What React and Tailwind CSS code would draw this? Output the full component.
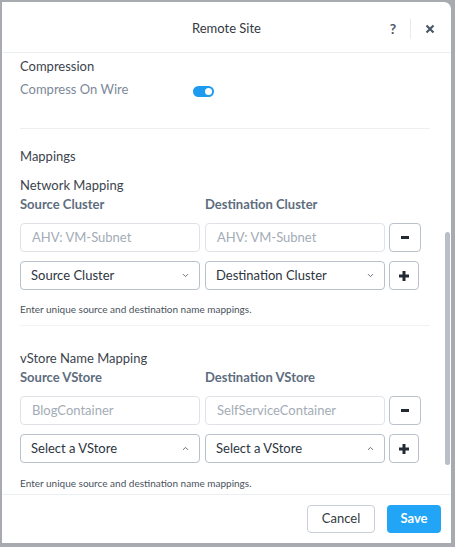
import { ChevronDown, ChevronUp } from "lucide-react";

const font = { fontFamily: "Lato, 'Open Sans', sans-serif" };

function TextBox({ value }) {
  return (
    <div className="w-[180px] h-[29px] border border-[#dfe3e8] rounded-[4px] flex items-center px-[11px] text-[13px] text-[#a3acb6] bg-white">
      {value}
    </div>
  );
}

function Select({ label, open }) {
  return (
    <div className="w-[180px] h-[29px] border border-[#b9c1cb] rounded-[4px] flex items-center justify-between pl-[10px] pr-[9px] text-[13px] text-[#2d3540] bg-white">
      <span>{label}</span>
      {open ? (
        <ChevronUp size={9} strokeWidth={2.5} className="text-[#5b6878]" />
      ) : (
        <ChevronDown size={9} strokeWidth={2.5} className="text-[#5b6878]" />
      )}
    </div>
  );
}

function SquareButton({ kind }) {
  return (
    <div
      className={`${kind === "minus" ? "w-[32px]" : "w-[30px]"} h-[29px] border border-[#b9c1cb] rounded-[4px] flex items-center justify-center bg-white`}
    >
      {kind === "minus" ? (
        <div className="w-[8px] h-[3px] bg-[#222a33]" />
      ) : (
        <svg width="12" height="12" viewBox="0 0 12 12">
          <path d="M6 1v10M1 6h10" stroke="#222a33" strokeWidth="3" />
        </svg>
      )}
    </div>
  );
}

function MappingBlock({ title, srcLabel, dstLabel, srcValue, dstValue, srcSelect, dstSelect, open, top, hintTop }) {
  return (
    <div className={top}>
      <div className="text-[13px] leading-[16px] text-[#3c444d]">{title}</div>
      <div className="flex gap-[5px] mt-[3px] text-[13px] leading-[16px] font-bold text-[#5d6d7e]">
        <div className="w-[180px]">{srcLabel}</div>
        <div className="w-[180px]">{dstLabel}</div>
      </div>
      <div className="flex items-center mt-[11px]">
        <TextBox value={srcValue} />
        <div className="w-[5px]" />
        <TextBox value={dstValue} />
        <div className="w-[4px]" />
        <SquareButton kind="minus" />
      </div>
      <div className="flex items-center mt-[9px]">
        <Select label={srcSelect} open={open} />
        <div className="w-[5px]" />
        <Select label={dstSelect} open={open} />
        <div className="w-[4px]" />
        <SquareButton kind="plus" />
      </div>
      <div className={`${hintTop} text-[10px] leading-[13px] text-[#4a525c]`}>
        Enter unique source and destination name mappings.
      </div>
    </div>
  );
}

export default function App() {
  return (
    <div className="w-[455px] h-[547px] bg-[#a7abaf] pl-[2px] pt-[2px] overflow-hidden" style={font}>
      <div className="relative w-[449px] h-[541px] bg-white rounded-tr-[7px] flex flex-col">
        {/* header */}
        <div className="h-[51px] border-b border-[#eceff2] flex items-center pt-[3px] relative shrink-0">
          <div className="absolute inset-0 pt-[3px] flex items-center justify-center text-[13px] text-[#333a42]">
            Remote Site
          </div>
          <div className="ml-auto flex items-center pr-[16px] relative">
            <span className="text-[14px] font-bold text-[#4b5868] w-[14px] text-center">?</span>
            <div className="w-px h-[20px] bg-[#e8ebee] ml-[10px] mr-[14px]" />
            <svg width="10" height="10" viewBox="0 0 10 10">
              <path d="M1.5 1.5l7 7M8.5 1.5l-7 7" stroke="#4b5868" strokeWidth="2.2" />
            </svg>
          </div>
        </div>

        {/* body */}
        <div className="flex-1 px-[18px] overflow-hidden">
          <div className="mt-[5px] text-[13px] leading-[16px] text-[#3c444d]">Compression</div>
          <div className="flex items-center mt-[7px]">
            <div className="w-[173px] text-[13px] leading-[16px] text-[#7b8998]">Compress On Wire</div>
            <div className="w-[21px] h-[11px] rounded-full bg-[#1d9bf0] flex items-center justify-end pr-[2px] mt-[5px]">
              <div className="w-[7px] h-[7px] rounded-full bg-white" />
            </div>
          </div>
          <div className="mt-[31px] border-t border-[#eceff2] mr-[3px]" />

          <div className="mt-[19px] text-[13px] leading-[16px] text-[#3c444d]">Mappings</div>
          <MappingBlock
            top="mt-[13px]"
            hintTop="mt-[13px]"
            title="Network Mapping"
            srcLabel="Source Cluster"
            dstLabel="Destination Cluster"
            srcValue="AHV: VM-Subnet"
            dstValue="AHV: VM-Subnet"
            srcSelect="Source Cluster"
            dstSelect="Destination Cluster"
          />
          <div className="mt-[9px] border-t border-[#f1f3f5] mr-[3px]" />
          <MappingBlock
            top="mt-[24px]"
            hintTop="mt-[14px]"
            title="vStore Name Mapping"
            srcLabel="Source VStore"
            dstLabel="Destination VStore"
            srcValue="BlogContainer"
            dstValue="SelfServiceContainer"
            srcSelect="Select a VStore"
            dstSelect="Select a VStore"
            open
          />
        </div>

        {/* footer */}
        <div className="h-[49px] border-t border-[#eceff2] flex items-start justify-end gap-[12px] pt-[10px] pr-[10px] shrink-0">
          <button className="w-[68px] h-[28px] border border-[#c9cfd6] rounded-[4px] text-[13px] text-[#333a42] bg-white">
            Cancel
          </button>
          <button className="w-[54px] h-[28px] rounded-[4px] text-[13px] font-bold text-white bg-[#22a5f6]">
            Save
          </button>
        </div>

        {/* scrollbar thumb */}
        <div className="absolute left-[443px] top-[230px] w-[5px] h-[233px] rounded-full bg-[#b9bfc9]" />
      </div>
    </div>
  );
}
